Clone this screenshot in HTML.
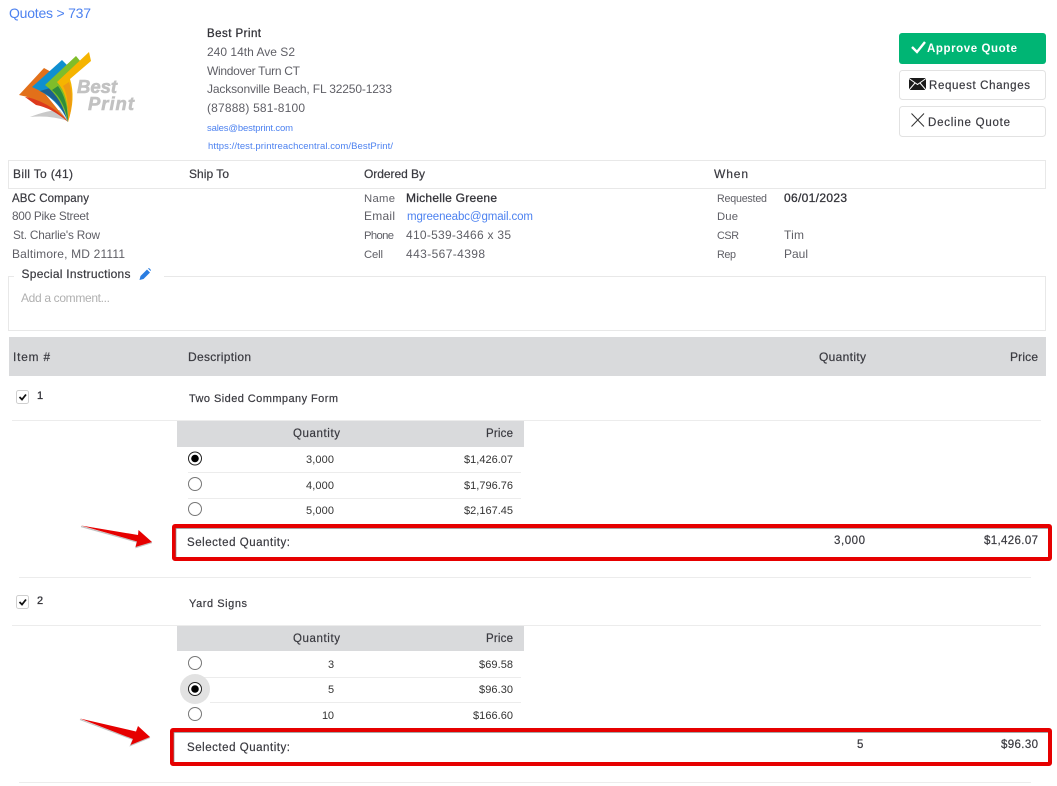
<!DOCTYPE html>
<html lang="en"><head><meta charset="utf-8"><title>Quote 737</title>
<style>
html,body{margin:0;padding:0;background:#fff;overflow:hidden}
svg{display:block}
text{font-family:"Liberation Sans",Arial,sans-serif;font-size:12px;fill:#5f5f66}
.h{fill:#3a3a40;stroke:#3a3a40;stroke-width:.2}
.b{fill:#34343a;stroke:#34343a;stroke-width:.3}
.l{fill:#4d82f0}
.s{font-size:9.5px}
.a{font-size:11px;fill:#333}
.t{font-size:11.3px}
.u{font-size:10.7px}
.ln{stroke:#ececec;stroke-width:1}
</style></head><body>
<svg width="1057" height="786" viewBox="0 0 1057 786" xmlns="http://www.w3.org/2000/svg">
<rect width="1057" height="786" fill="#fff"/>

<text x="9" y="18" textLength="82" class="l" style="font-size:14px">Quotes &gt; 737</text>

<!-- logo -->
<g>
<path d="M30,117Q48,110 60,110L68,121Q50,115 30,117Z" fill="#c9c9c9"/>
<path d="M25,97Q52,98 68,122Q52,108 36,105Z" fill="#dd3a1c"/>
<path d="M19,95L44,68L53,73L42,90L68,122Q50,101 19,95Z" fill="#e2701a"/>
<path d="M32,87L62,60L68,66L54,86L68,122Q58,98 32,87Z" fill="#0f8fd0"/>
<path d="M40,91Q60,100 68,122Q62,100 50,88Z" fill="#1d5f8f"/>
<path d="M45,85L76,56L81,62L64,84Q68,92 68,122Q62,98 45,85Z" fill="#7fbd2a"/>
<path d="M52,90Q64,100 68,122Q68,100 58,86Z" fill="#2e8c3c"/>
<path d="M57,82L89,52L91,61L70,79Q76,98 68,122Q69,95 57,82Z" fill="#f5b400"/>
<path d="M63,86Q69,96 68,122Q75,100 69,82Z" fill="#ee9a12"/>
<text x="77" y="93" textLength="40" style="font-size:18.500px;font-weight:bold;font-style:italic;fill:#c2c2c2;stroke:#c2c2c2;stroke-width:.6">Best</text>
<text x="88" y="110" textLength="46" style="font-size:18.500px;font-weight:bold;font-style:italic;fill:#c2c2c2;stroke:#c2c2c2;stroke-width:.6">Print</text>
</g>

<text x="207" y="37" textLength="54" class="b" style="font-size:11.500px">Best Print</text>
<text x="207" y="56" textLength="88">240 14th Ave S2</text>
<text x="207" y="75" textLength="93">Windover Turn CT</text>
<text x="207" y="93" textLength="185">Jacksonville Beach, FL 32250-1233</text>
<text x="207" y="112" textLength="98">(87888) 581-8100</text>
<text x="207" y="131" textLength="86" class="l s">sales@bestprint.com</text>
<text x="208" y="149" textLength="185" class="l s">https://test.printreachcentral.com/BestPrint/</text>

<!-- buttons -->
<rect x="899" y="33" width="147" height="31" rx="3" fill="#00b574"/>
<path d="M912,47L917,52L925,42" fill="none" stroke="#fff" stroke-width="2.400"/>
<text x="927" y="52" textLength="90" style="font-size:11.500px;font-weight:bold;fill:#fff">Approve Quote</text>

<rect x="899.500" y="70.500" width="146" height="29" rx="3" fill="#fff" stroke="#e2e2e2"/>
<rect x="909" y="78" width="17" height="12" rx="1" fill="#1a1a1a"/>
<path d="M909,78.500L917.500,84.500L926,78.500M909,90L915,83M926,90L920,83" fill="none" stroke="#fff" stroke-width="1"/>
<text x="929" y="89" textLength="101" class="h" style="font-size:11.500px">Request Changes</text>

<rect x="899.500" y="106.500" width="146" height="30" rx="3" fill="#fff" stroke="#e2e2e2"/>
<path d="M911.500,113.500L924,126.500M924,113.500L911.500,126.500" fill="none" stroke="#333" stroke-width="1"/>
<text x="928" y="126" textLength="82" class="h" style="font-size:11.500px">Decline Quote</text>

<!-- info header -->
<rect x="8.500" y="160.500" width="1037" height="28" fill="#fff" stroke="#e8e8e8"/>
<text x="13" y="178" textLength="60" class="h">Bill To (41)</text>
<text x="189" y="178" textLength="40" class="h">Ship To</text>
<text x="364" y="178" textLength="61" class="h">Ordered By</text>
<text x="714" y="178" textLength="34" class="h">When</text>

<text x="12" y="202" textLength="77" class="h" style="font-size:11.500px">ABC Company</text>
<text x="12" y="220" textLength="77" style="font-size:11.800px">800 Pike Street</text>
<text x="13" y="239" textLength="87" style="font-size:11.800px">St. Charlie's Row</text>
<text x="12" y="258" textLength="113">Baltimore, MD 21111</text>

<text x="364" y="202" textLength="31" class="t">Name</text>
<text x="406" y="202" textLength="91" class="b">Michelle Greene</text>
<text x="364" y="220" textLength="31">Email</text>
<text x="407" y="220" textLength="126" class="l" style="font-size:11.500px">mgreeneabc@gmail.com</text>
<text x="364" y="239" textLength="30" class="t">Phone</text>
<text x="406" y="239" textLength="105">410-539-3466 x 35</text>
<text x="364" y="258" textLength="19" class="t">Cell</text>
<text x="406" y="258" textLength="79">443-567-4398</text>

<text x="717" y="202" textLength="50" class="u">Requested</text>
<text x="784" y="202" textLength="63" class="b">06/01/2023</text>
<text x="717" y="220" textLength="21" class="t">Due</text>
<text x="717" y="239" textLength="22" style="font-size:10.800px">CSR</text>
<text x="784" y="239" textLength="20">Tim</text>
<text x="717" y="258" textLength="19" style="font-size:10.800px">Rep</text>
<text x="784" y="258" textLength="24">Paul</text>

<!-- special instructions -->
<path d="M14,276.500H8.500V330.500H1045.500V276.500H164" fill="none" stroke="#e8e8e8"/>
<text x="21.500" y="278" textLength="109" class="h">Special Instructions</text>
<path d="M139.500,280L140.500,276L147,269.500L150,272.500L143.500,279Z M148,268.500L149,268L151,270L150.500,271Z" fill="#2a7de1"/>
<text x="21" y="302" textLength="89" style="fill:#b0b0b0">Add a comment...</text>

<!-- items header -->
<rect x="9" y="337" width="1037" height="39" fill="#d9dadc"/>
<text x="13" y="361" textLength="37" class="h" style="font-size:11.800px">Item #</text>
<text x="188" y="361" textLength="63" class="h">Description</text>
<text x="819" y="361" textLength="47" class="h">Quantity</text>
<text x="1010" y="361" textLength="28" class="h">Price</text>

<!-- item 1 -->
<rect x="16.500" y="390.500" width="12" height="13" rx="2" fill="#fff" stroke="#cfcfcf"/>
<path d="M19.500,397L22,399.500L26,394.500" fill="none" stroke="#111" stroke-width="1.800"/>
<text x="37" y="399" textLength="6" class="b" style="font-size:11px">1</text>
<text x="189" y="402" textLength="149" class="h" style="font-size:11px">Two Sided Commpany Form</text>
<line x1="12" y1="420.500" x2="1041" y2="420.500" class="ln"/>
<rect x="177" y="421" width="347" height="26" fill="#d9dadc"/>
<text x="293" y="437" textLength="47" class="h" style="font-size:11.500px">Quantity</text>
<text x="486" y="437" textLength="27" class="h" style="font-size:11.500px">Price</text>

<circle cx="195" cy="458.500" r="6.500" fill="#fff" stroke="#222"/><circle cx="195" cy="458.500" r="3.800" fill="#000"/>
<text x="306" y="463" textLength="28" class="a">3,000</text>
<text x="464" y="463" textLength="49" class="a">$1,426.07</text>
<line x1="188" y1="472.500" x2="521" y2="472.500" class="ln"/>
<circle cx="195" cy="484" r="6.500" fill="#fff" stroke="#777"/>
<text x="306" y="489" textLength="28" class="a">4,000</text>
<text x="464" y="489" textLength="49" class="a">$1,796.76</text>
<line x1="188" y1="498.500" x2="521" y2="498.500" class="ln"/>
<circle cx="195" cy="509" r="6.500" fill="#fff" stroke="#777"/>
<text x="306" y="514" textLength="28" class="a">5,000</text>
<text x="464" y="514" textLength="49" class="a">$2,167.45</text>

<rect x="174" y="526" width="876" height="33" rx="1" fill="#fff" stroke="#e60000" stroke-width="4"/>
<path d="M176,528.500H1048M176,528V557" stroke="#8a8a8a" stroke-width=".7" fill="none"/>
<text x="187" y="546" textLength="103" class="h" style="font-size:11.500px">Selected Quantity:</text>
<text x="834" y="544" textLength="31" class="h" style="font-size:11.500px">3,000</text>
<text x="984" y="544" textLength="54" class="h" style="font-size:11.500px">$1,426.07</text>
<path d="M81,526.500L137,542L136,547.500L152,542.500" fill="none" stroke="#777" stroke-opacity=".45" stroke-width="1.200"/>
<path d="M81,525.500L138,535L138.500,530L152,542L135.500,547L137,541.500Z" fill="#e60000"/>
<line x1="19" y1="577.500" x2="1031" y2="577.500" class="ln"/>

<!-- item 2 -->
<rect x="16.500" y="595.500" width="12" height="13" rx="2" fill="#fff" stroke="#cfcfcf"/>
<path d="M19.500,602L22,604.500L26,599.500" fill="none" stroke="#111" stroke-width="1.800"/>
<text x="37" y="604" textLength="7" class="b" style="font-size:11px">2</text>
<text x="189" y="607" textLength="58" class="h" style="font-size:11px">Yard Signs</text>
<line x1="12" y1="625.500" x2="1041" y2="625.500" class="ln"/>
<rect x="177" y="626" width="347" height="25" fill="#d9dadc"/>
<text x="293" y="642" textLength="47" class="h" style="font-size:11.500px">Quantity</text>
<text x="486" y="642" textLength="27" class="h" style="font-size:11.500px">Price</text>

<circle cx="195" cy="663" r="6.500" fill="#fff" stroke="#777"/>
<text x="328" y="668" textLength="6" class="a">3</text>
<text x="479" y="668" textLength="34" class="a">$69.58</text>
<line x1="188" y1="677.500" x2="521" y2="677.500" class="ln"/>
<circle cx="195" cy="689" r="15" fill="#e2e2e2"/>
<circle cx="195" cy="689" r="6.500" fill="#fff" stroke="#222"/><circle cx="195" cy="689" r="3.800" fill="#000"/>
<text x="328" y="693" textLength="6" class="a">5</text>
<text x="479" y="693" textLength="34" class="a">$96.30</text>
<line x1="210" y1="702.500" x2="521" y2="702.500" class="ln"/>
<circle cx="195" cy="714" r="6.500" fill="#fff" stroke="#777"/>
<text x="322" y="719" textLength="12" class="a">10</text>
<text x="473" y="719" textLength="40" class="a">$166.60</text>

<rect x="172" y="730" width="878" height="34" rx="1" fill="#fff" stroke="#e60000" stroke-width="4"/>
<path d="M174,732.500H1048M174,732V762" stroke="#8a8a8a" stroke-width=".7" fill="none"/>
<text x="187" y="751" textLength="103" class="h" style="font-size:11.500px">Selected Quantity:</text>
<text x="857" y="748" textLength="7" class="h" style="font-size:11.500px">5</text>
<text x="1001" y="748" textLength="37" class="h" style="font-size:11.500px">$96.30</text>
<path d="M80,719.500L133,739.500L130.500,745.500L150,737.500" fill="none" stroke="#777" stroke-opacity=".45" stroke-width="1.200"/>
<path d="M80,718.500L136,731.500L138,726L150,737L130.500,745L133,739Z" fill="#e60000"/>
<line x1="19" y1="782.500" x2="1031" y2="782.500" class="ln"/>
</svg>
</body></html>
